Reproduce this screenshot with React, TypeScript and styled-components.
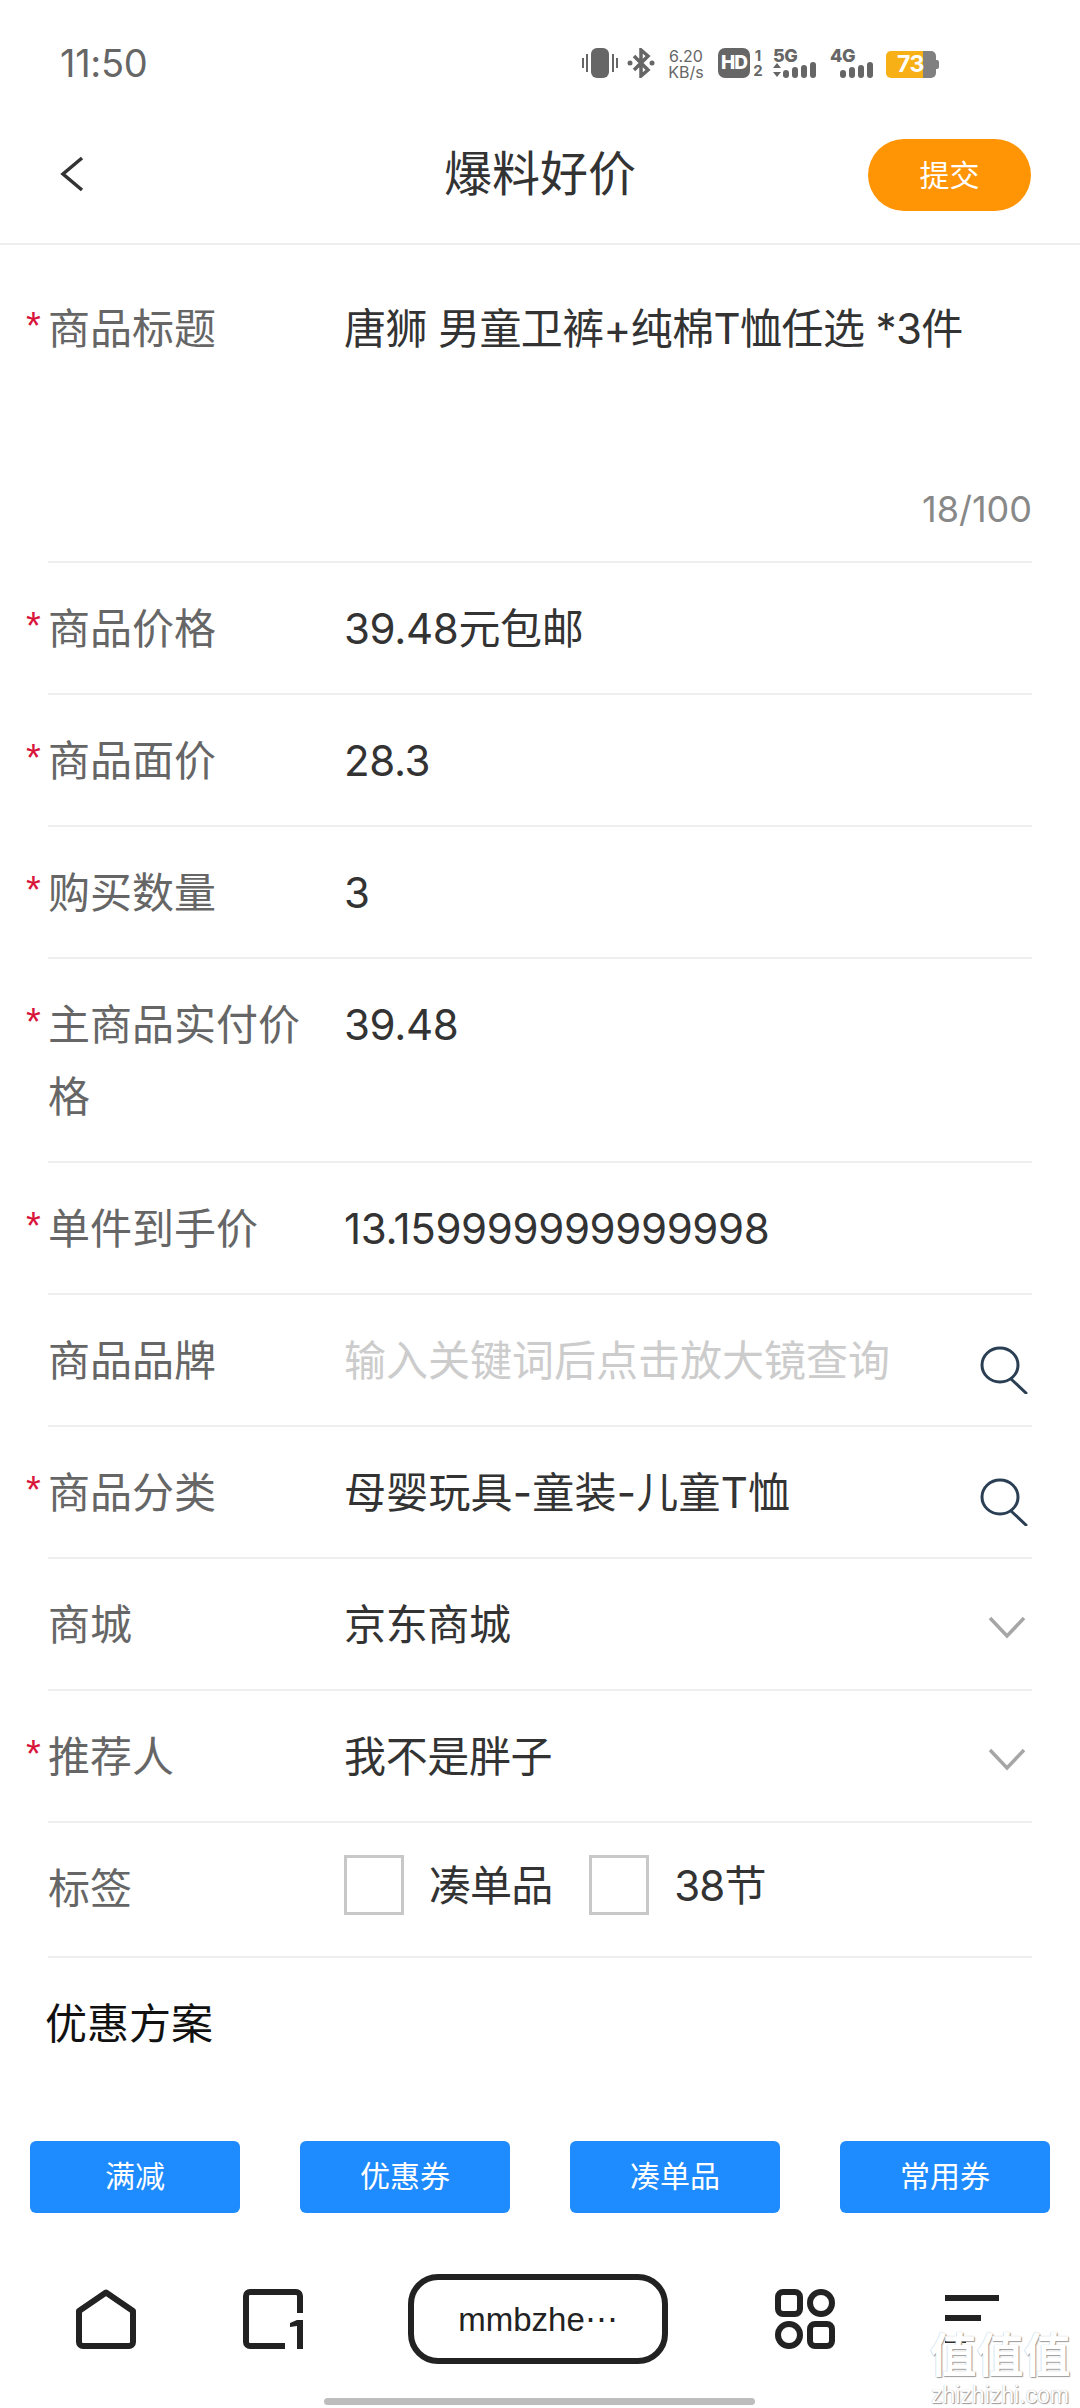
import styled, { createGlobalStyle } from 'styled-components';

const GlobalStyle = createGlobalStyle`
  html, body {
    margin: 0;
    padding: 0;
    background: #fff;
  }
  * {
    box-sizing: border-box;
  }
`;

const FONT = `Inter, "Noto Sans CJK SC", sans-serif`;

const Page = styled.div`
  position: relative;
  width: 1080px;
  height: 2408px;
  overflow: hidden;
  background: #fff;
  font-family: ${FONT};
  display: flex;
  flex-direction: column;
`;

// status bar
const StatusBar = styled.div`
  height: 84px;
  padding: 41px 141px 0 60px;
  display: flex;
  justify-content: space-between;
  align-items: flex-start;
  color: #666;
`;
const Time = styled.span`
  font-size: 38px;
  line-height: 44px;
  font-weight: 400;
  letter-spacing: -0.3px;
`;
const StatusIcons = styled.div`
  display: flex;
  align-items: flex-start;
  height: 32px;
  margin-top: 7px;
`;
const Speed = styled.div`
  width: 36px;
  margin: 0 14px 0 13px;
  font-size: 16px;
  line-height: 16px;
  text-align: center;
  white-space: nowrap;
`;
const HdBadge = styled.span`
  width: 32px;
  height: 30px;
  border-radius: 7px;
  background: #666;
  color: #fff;
  font-size: 19px;
  font-weight: 800;
  line-height: 30px;
  text-align: center;
  letter-spacing: -1px;
`;
const SimSlots = styled.div`
  width: 12px;
  margin: 0 9px 0 2px;
  font-size: 15px;
  font-weight: 700;
  line-height: 15px;
  text-align: center;
`;
const Network = styled.div<{ $gap: number }>`
  position: relative;
  width: 46px;
  height: 30px;
  margin-right: ${(p) => p.$gap}px;
`;
const NetworkLabel = styled.span`
  position: absolute;
  left: 0;
  top: -1px;
  font-size: 18px;
  line-height: 17px;
  font-weight: 800;
  letter-spacing: -0.5px;
`;
const NetworkBars = styled.svg`
  position: absolute;
  right: 0;
  bottom: 0;
`;
const Battery = styled.div`
  position: relative;
  width: 53px;
  height: 27px;
  margin-top: 3px;
  display: flex;
`;
const BatteryFill = styled.span`
  width: 37px;
  height: 27px;
  border-radius: 5px 0 0 5px;
  background: #f7b116;
`;
const BatteryRest = styled.span`
  width: 13px;
  height: 27px;
  border-radius: 0 5px 5px 0;
  background: #808080;
`;
const BatteryCap = styled.span`
  width: 3px;
  height: 9px;
  margin-top: 9px;
  border-radius: 0 2px 2px 0;
  background: #808080;
`;
const BatteryLevel = styled.span`
  position: absolute;
  left: 11px;
  top: 0;
  color: #fff;
  font-size: 23px;
  font-weight: 700;
  line-height: 27px;
  letter-spacing: -0.5px;
`;

// header
const Header = styled.header`
  position: relative;
  height: 161px;
  padding: 0 49px 0 60px;
  border-bottom: 2px solid #eeeeee;
  display: flex;
  align-items: center;
  justify-content: space-between;
`;
const Title = styled.h1`
  position: absolute;
  left: 0;
  right: 0;
  top: 60px;
  margin: 0;
  font-size: 48px;
  line-height: 60px;
  font-weight: 400;
  color: #333;
  text-align: center;
  pointer-events: none;
`;
const SubmitButton = styled.button`
  width: 163px;
  height: 72px;
  margin-top: 22px;
  border: 0;
  border-radius: 36px;
  background: #ff9504;
  color: #fff;
  font-family: inherit;
  font-size: 30px;
  padding: 0 0 3px;
`;
const BackIcon = styled.svg`
  margin-top: 20px;
`;

// form
const Form = styled.div`
  margin: 0 48px;
  padding-top: 18px;
`;
const Row = styled.div<{ $height?: number }>`
  position: relative;
  display: flex;
  align-items: flex-start;
  height: ${(p) => (p.$height ? `${p.$height}px` : 'auto')};
  padding: 30px 0 28px;
  border-bottom: 2px solid #eeeeee;
`;
const Label = styled.div<{ $required?: boolean }>`
  position: relative;
  width: 296px;
  flex: none;
  padding-right: 4px;
  font-size: 42px;
  line-height: 72px;
  color: #666;
  &::before {
    content: ${(p) => (p.$required ? "'*'" : 'none')};
    position: absolute;
    left: -22px;
    top: -3px;
    color: #d9143a;
    font-size: 38px;
    font-family: "Liberation Sans", sans-serif;
  }
`;
const Value = styled.div<{ $placeholder?: boolean; $tracking?: number }>`
  flex: 1;
  font-size: 42px;
  line-height: 72px;
  letter-spacing: ${(p) => p.$tracking ?? -0.35}px;
  color: ${(p) => (p.$placeholder ? '#cccccc' : '#333')};
  white-space: nowrap;
`;
const Counter = styled.div`
  position: absolute;
  right: 0;
  bottom: 30px;
  font-size: 36px;
  line-height: 44px;
  color: #888;
`;
const TrailingIcon = styled.svg<{ $top: number; $right: number }>`
  flex: none;
  margin-top: ${(p) => p.$top}px;
  margin-right: ${(p) => p.$right}px;
`;
const TagGroup = styled.div`
  display: flex;
  align-items: center;
  height: 60px;
  margin-top: 2px;
`;
const CheckBox = styled.span`
  width: 60px;
  height: 60px;
  border: 3px solid #c8c8c8;
  background: #fff;
`;
const TagText = styled.span`
  margin: 0 37px 6px 25px;
  font-size: 42px;
  letter-spacing: -0.9px;
  color: #333;
`;
const SectionTitle = styled.div`
  padding: 36px 47px 0 45px;
  font-size: 42px;
  line-height: 60px;
  color: #111;
`;

// coupon buttons
const ActionBar = styled.div`
  margin-top: 87px;
  padding: 0 30px;
  display: flex;
  gap: 60px;
`;
const ActionButton = styled.button`
  width: 210px;
  height: 72px;
  padding: 0 0 6px;
  border: 0;
  border-radius: 6px;
  background: #1e8bff;
  color: #fff;
  font-family: inherit;
  font-size: 30px;
`;

// browser toolbar
const BottomNav = styled.nav`
  margin-top: 61px;
  height: 90px;
  position: relative;
  display: flex;
  align-items: center;
  padding: 0 0 0 74px;
`;
const NavIcon = styled.svg<{ $gap: number }>`
  flex: none;
  margin-right: ${(p) => p.$gap}px;
`;
const AddressPill = styled.div`
  width: 260px;
  height: 90px;
  margin-right: 107px;
  border: 6px solid #222;
  border-radius: 30px;
  display: flex;
  align-items: center;
  justify-content: center;
  font-family: "Liberation Sans", sans-serif;
  font-size: 33px;
  color: #222;
`;
const HomeBar = styled.div`
  position: absolute;
  left: 324px;
  bottom: 3px;
  width: 431px;
  height: 7px;
  border-radius: 4px;
  background: #bdbdbd;
`;
const Watermark = styled.div`
  position: absolute;
  right: 9px;
  bottom: 3px;
  width: 142px;
  text-align: center;
  color: #fff;
  font-family: "Liberation Sans", sans-serif;
  font-size: 23px;
  line-height: 20px;
  white-space: nowrap;
  text-shadow: 1px 1px 1px #999, 0 0 1px #aaa;
`;
const WatermarkMark = styled.div`
  font-family: "Noto Sans CJK SC", sans-serif;
  font-size: 47px;
  font-weight: 700;
  line-height: 48px;
  margin-bottom: 9px;
`;

const SearchIcon = () => (
  <TrailingIcon $top={21} $right={4} width="48" height="48" viewBox="0 0 48 48" fill="none" stroke="#2b3f54" strokeWidth="3">
    <ellipse cx="20" cy="19" rx="18" ry="17" />
    <path d="M31 33l15 14" strokeLinecap="round" />
  </TrailingIcon>
);

const ChevronIcon = () => (
  <TrailingIcon $top={26} $right={6} width="38" height="24" viewBox="0 0 38 24" fill="none" stroke="#a6a6a6" strokeWidth="3.5">
    <path d="M2 3l17 18L36 3" />
  </TrailingIcon>
);

const rows: { label: string; value: string; required?: boolean }[] = [
  { label: '商品价格', value: '39.48元包邮', required: true },
  { label: '商品面价', value: '28.3', required: true },
  { label: '购买数量', value: '3', required: true },
  { label: '主商品实付价格', value: '39.48', required: true },
  { label: '单件到手价', value: '13.159999999999998', required: true },
];

const coupons = ['满减', '优惠券', '凑单品', '常用券'];

const App = () => {
  return (
    <Page>
      <GlobalStyle />
      <StatusBar>
        <Time>11:50</Time>
        <StatusIcons>
          <svg width="36" height="30" viewBox="0 0 36 30" fill="#666">
            <rect x="9" y="0" width="18" height="30" rx="6" />
            <rect x="0" y="10" width="2" height="10" />
            <rect x="4" y="6" width="2" height="18" />
            <rect x="30" y="6" width="2" height="18" />
            <rect x="34" y="10" width="2" height="10" />
          </svg>
          <svg width="28" height="30" viewBox="0 0 28 30" fill="none" stroke="#666" strokeWidth="3.5" style={{ marginLeft: 9 }}>
            <path d="M7 8l14 14-7 6V2l7 6L7 22" />
            <circle cx="3" cy="15" r="2.5" fill="#666" stroke="none" />
            <circle cx="25" cy="15" r="2.5" fill="#666" stroke="none" />
          </svg>
          <Speed>
            6.20
            <br />
            KB/s
          </Speed>
          <HdBadge>HD</HdBadge>
          <SimSlots>
            1
            <br />2
          </SimSlots>
          <Network $gap={11}>
            <NetworkLabel>5G</NetworkLabel>
            <NetworkBars width="46" height="16" viewBox="0 0 46 16" fill="#666">
              <path d="M0 6l4-5 4 5zM0 10h8l-4 5z" />
              <rect x="10" y="8" width="6" height="8" rx="3" />
              <rect x="19" y="5" width="6" height="11" rx="3" />
              <rect x="28" y="3" width="6" height="13" rx="3" />
              <rect x="37" y="0" width="6" height="16" rx="3" />
            </NetworkBars>
          </Network>
          <Network $gap={10}>
            <NetworkLabel>4G</NetworkLabel>
            <NetworkBars width="36" height="16" viewBox="0 0 36 16" fill="#666">
              <rect x="0" y="8" width="6" height="8" rx="3" />
              <rect x="9" y="5" width="6" height="11" rx="3" />
              <rect x="18" y="3" width="6" height="13" rx="3" />
              <rect x="27" y="0" width="6" height="16" rx="3" />
            </NetworkBars>
          </Network>
          <Battery>
            <BatteryFill />
            <BatteryRest />
            <BatteryCap />
            <BatteryLevel>73</BatteryLevel>
          </Battery>
        </StatusIcons>
      </StatusBar>

      <Header>
        <BackIcon width="24" height="36" viewBox="0 0 24 36" fill="none" stroke="#333" strokeWidth="3.5">
          <path d="M22 2L3 18l19 16" />
        </BackIcon>
        <Title>爆料好价</Title>
        <SubmitButton>提交</SubmitButton>
      </Header>

      <Form>
        <Row $height={300}>
          <Label $required>商品标题</Label>
          <Value $tracking={-0.6}>唐狮 男童卫裤+纯棉T恤任选 *3件</Value>
          <Counter>18/100</Counter>
        </Row>
        {rows.map((row) => (
          <Row key={row.label}>
            <Label $required={row.required}>{row.label}</Label>
            <Value>{row.value}</Value>
          </Row>
        ))}
        <Row>
          <Label>商品品牌</Label>
          <Value $placeholder $tracking={0}>输入关键词后点击放大镜查询</Value>
          <SearchIcon />
        </Row>
        <Row>
          <Label $required>商品分类</Label>
          <Value $tracking={0.2}>母婴玩具-童装-儿童T恤</Value>
          <SearchIcon />
        </Row>
        <Row>
          <Label>商城</Label>
          <Value>京东商城</Value>
          <ChevronIcon />
        </Row>
        <Row>
          <Label $required>推荐人</Label>
          <Value>我不是胖子</Value>
          <ChevronIcon />
        </Row>
        <Row $height={135}>
          <Label>标签</Label>
          <TagGroup>
            <CheckBox />
            <TagText>凑单品</TagText>
            <CheckBox />
            <TagText>38节</TagText>
          </TagGroup>
        </Row>
      </Form>

      <SectionTitle>优惠方案</SectionTitle>

      <ActionBar>
        {coupons.map((name) => (
          <ActionButton key={name}>{name}</ActionButton>
        ))}
      </ActionBar>

      <BottomNav>
        <NavIcon $gap={105} width="64" height="64" viewBox="0 0 64 64" fill="none" stroke="#222" strokeWidth="6" strokeLinejoin="round">
          <path d="M5 24L32 5.5 59 24v31a4 4 0 0 1-4 4H9a4 4 0 0 1-4-4z" />
        </NavIcon>
        <NavIcon $gap={104} width="61" height="64" viewBox="0 0 61 64" fill="none" stroke="#222" strokeWidth="6">
          <path d="M57 26V9a4 4 0 0 0-4-4H7a4 4 0 0 0-4 4v46a4 4 0 0 0 4 4h35" />
          <path d="M47 36l7-3h6v29h-6V39l-7 1z" fill="#222" stroke="none" />
        </NavIcon>
        <AddressPill>mmbzhe⋯</AddressPill>
        <NavIcon $gap={110} width="60" height="64" viewBox="0 0 60 64" fill="none" stroke="#222" strokeWidth="6">
          <rect x="3" y="5" width="22" height="22" rx="5" />
          <ellipse cx="46" cy="16" rx="11" ry="11" />
          <ellipse cx="14" cy="48" rx="11" ry="11" />
          <rect x="35" y="37" width="22" height="22" rx="5" />
        </NavIcon>
        <NavIcon $gap={0} width="56" height="50" viewBox="0 0 56 50" fill="#222">
          <rect x="0" y="1" width="54" height="6" />
          <rect x="0" y="21" width="36" height="6" />
          <rect x="0" y="43" width="21" height="6" />
        </NavIcon>
      </BottomNav>

      <HomeBar />
      <Watermark>
        <WatermarkMark>值值值</WatermarkMark>
        zhizhizhi.com
      </Watermark>
    </Page>
  );
};

export default App;
